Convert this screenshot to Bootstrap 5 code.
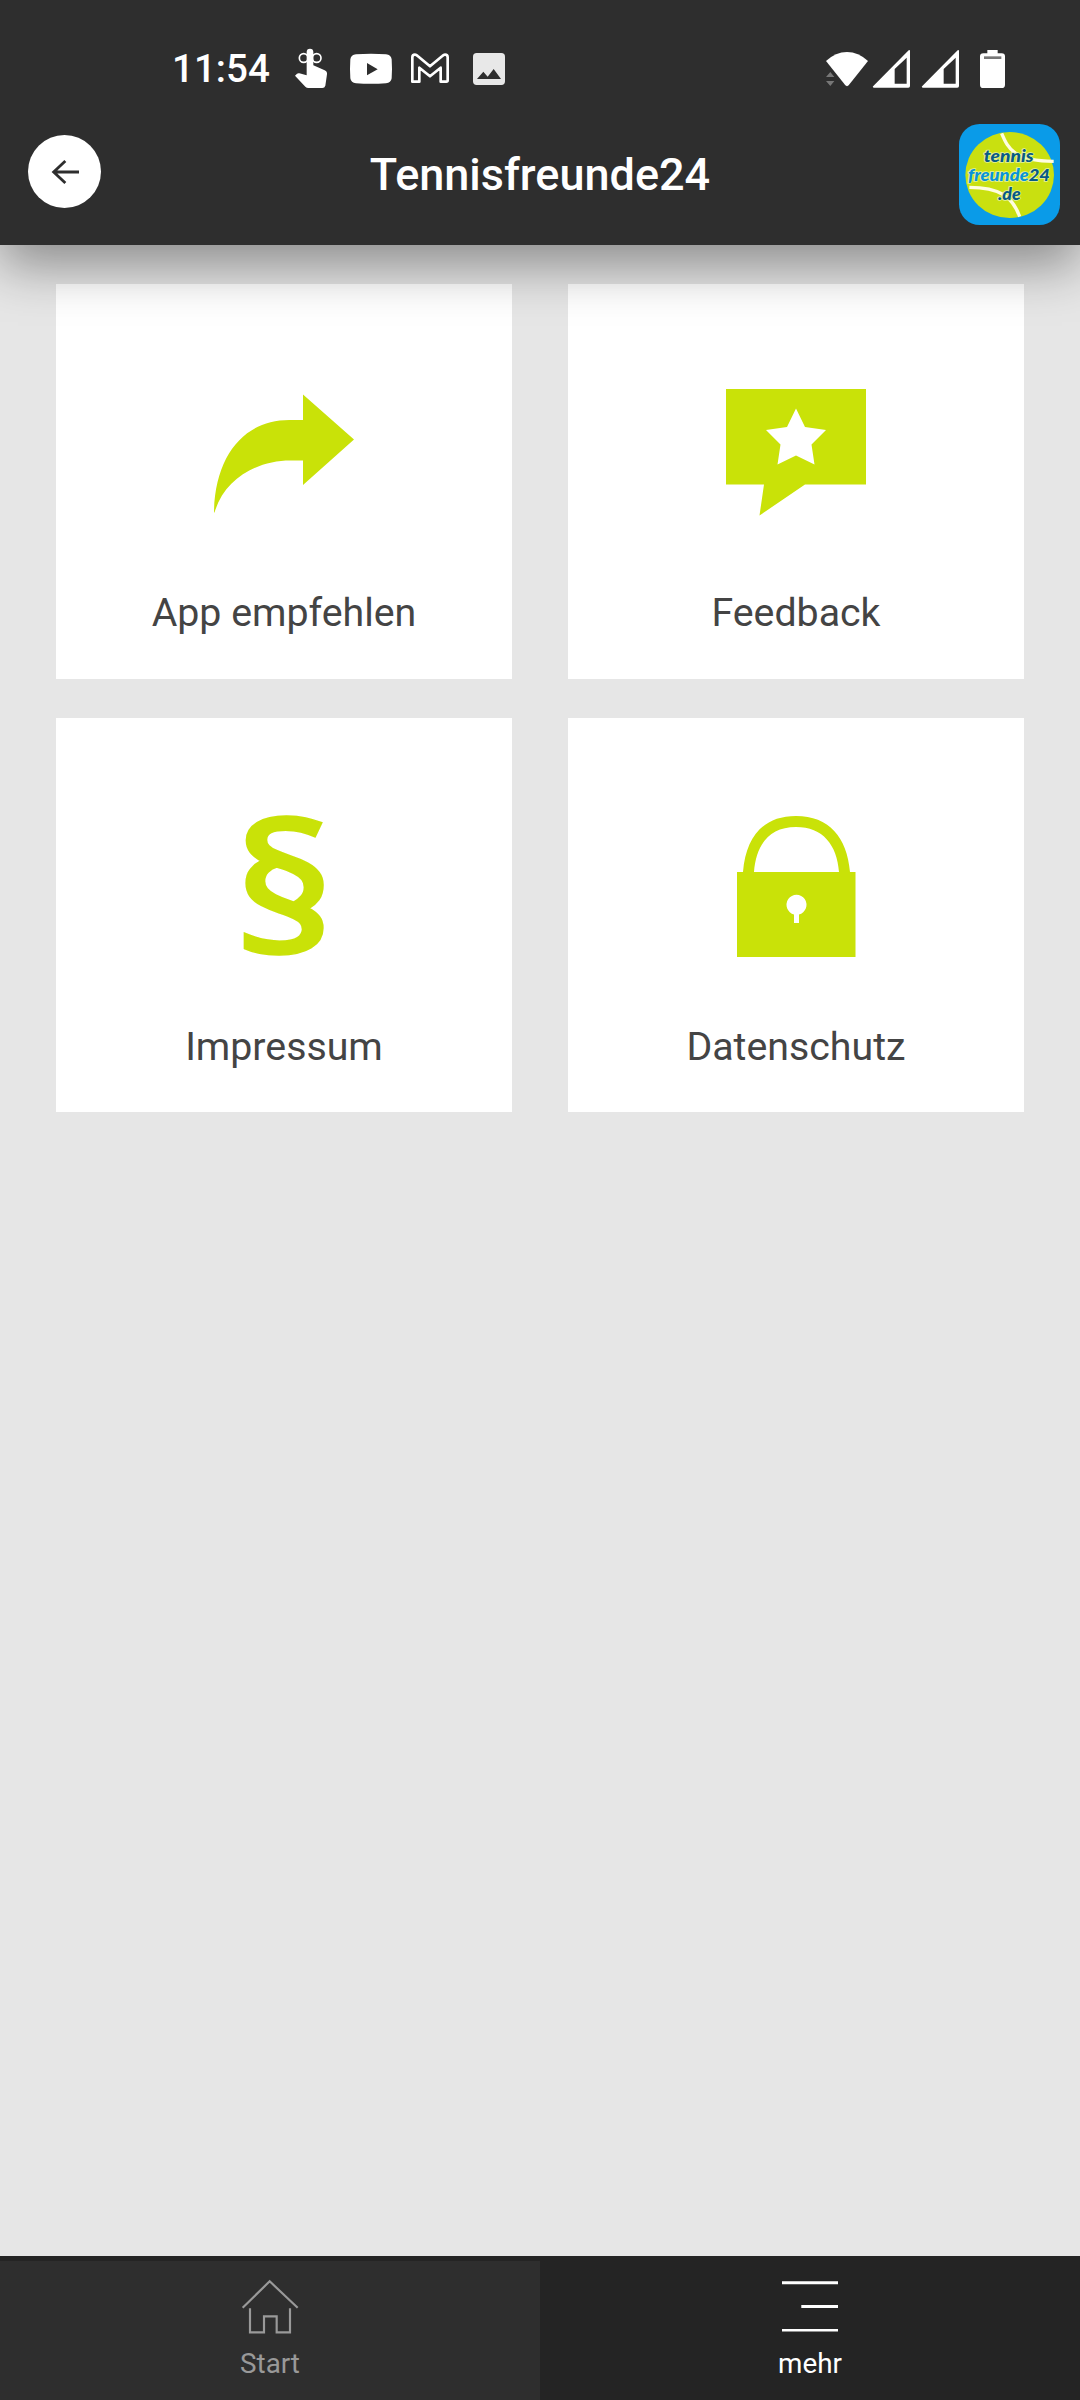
<!DOCTYPE html>
<html lang="de">
<head>
<meta charset="utf-8">
<meta name="viewport" content="width=device-width, initial-scale=1">
<title>Tennisfreunde24</title>
<link href="https://cdn.jsdelivr.net/npm/bootstrap@5.3.0/dist/css/bootstrap.min.css" rel="stylesheet">
<style>
  body { font-family: Roboto, "Liberation Sans", sans-serif; background: #e6e6e6; height: 2400px; overflow: hidden; }
  svg { display: block; flex: none; }
  .app-head { height: 245px; background: #2e2e2e; box-shadow: 0 20px 50px rgba(0,0,0,.4); z-index: 5; }
  .status { height: 110px; padding: 30px 74px 0 172px; }
  .status svg { height: 80px; fill: #fff; }
  .clock { width: 122px; font-size: 38.6px; font-weight: 500; line-height: 77px; }
  .gap-a { margin-left: 21px; }
  .gap-b { margin-left: 17px; }
  .gap-c { margin-left: 3px; }
  .gap-d { margin-left: 10px; }
  .gap-e { margin-left: 22px; }
  .title-bar { height: 135px; padding: 14px 20px 0 28px; }
  .back { width: 73px; height: 73px; margin-top: 11px; }
  .app-name { font-size: 45px; font-weight: 500; line-height: 52px; margin: 25px 0 0 20px; }
  .tiles { padding: 39px 56px 0; }
  .tile-row { --bs-gutter-x: 56px; }
  .tile-row + .tile-row { padding-top: 39px; }
  .tile { height: 394.5px; border: 0; border-radius: 0; color: #444; text-decoration: none; }
  .tile svg { width: 100%; height: 296px; fill: #c9e208; }
  .tile span { font-size: 39.3px; line-height: 46px; margin-top: 10px; }
  .tabs { height: 144px; background: #242424; }
  .tab { font-size: 27.8px; line-height: 32px; color: #999; text-decoration: none; }
  .tab.start { background: #2e2e2e; border-top: 5px solid #242424; }
  .tab.more { color: #fff; padding-top: 5px; }
  .tab svg { width: 60px; height: 60px; margin: 15px 0 12px; }
</style>
<script src="https://cdn.jsdelivr.net/npm/bootstrap@5.3.0/dist/js/bootstrap.bundle.min.js"></script>
</head>
<body class="d-flex flex-column">
<header class="app-head position-relative flex-shrink-0 text-white">
  <div class="status d-flex justify-content-between">
    <div class="d-flex">
      <span class="clock">11:54</span>
      <svg width="34" viewBox="432 0 102 240"><path d="M470 66a10 10 0 0 1 20 0v40l34 15q8 3 7 12l-5 34q-2 7-9 7h-42q-5 0-9-4l-31-33 6-6q3-2 7-1l22 6z"/><g fill="none" stroke="#fff" stroke-width="5"><circle cx="461" cy="84" r="13"/><circle cx="500" cy="84" r="13"/></g></svg>
      <svg class="gap-a" width="44" viewBox="597 0 132 240"><path fill-rule="evenodd" d="M618 73q45-3 90 0 15 1 17 15 2 29 0 57-2 14-17 15-45 3-90 0-15-1-17-15-2-28 0-57 2-14 17-15zM651 99v37l32-18.500z"/></svg>
      <svg class="gap-b" width="40" viewBox="780 0 120 240"><path fill="none" stroke="#fff" stroke-width="8" stroke-linejoin="round" d="M787 155V82q0-8 8-8 4 0 8 4l37 31 37-31q4-4 8-4 8 0 8 8v69q0 4-4 4h-17v-42l-32 26-32-26v42h-17q-4 0-4-4z"/></svg>
      <svg class="gap-e" width="34" viewBox="966 0 102 240"><path fill="#e8e8e8" fill-rule="evenodd" d="M980 69h74q11 0 11 11v74q0 11-11 11h-74q-11 0-11-11V80q0-11 11-11zM981 147h72l-22-30-18 23-13-15z"/></svg>
    </div>
    <div class="d-flex">
      <svg width="44" viewBox="75 0 132 240"><path d="M78 93q29-27 63-27t63 27l-58 73q-5 5-10 0z"/><path fill="#777" d="M78 141l13-15 12 15zM78 153h25l-12 15z"/></svg>
      <svg class="gap-c" width="39" viewBox="216 0 117 240"><path fill-rule="evenodd" d="M326 61q4-3 4 3v104q0 5-5 5H222q-6-1-2-5zM284 117v44h36V83z"/></svg>
      <svg class="gap-d" width="39" viewBox="363 0 117 240"><path fill-rule="evenodd" d="M473 61q4-3 4 3v104q0 5-5 5H369q-6-1-2-5zM431 117v44h36V83z"/></svg>
      <svg width="46" viewBox="480 0 138 240"><path d="M562 60h31v10h12q10 0 10 9v85q0 10-10 10h-55q-10 0-10-10V79q0-9 10-9h12z"/><path fill="#777" d="M552 79h52v8h-52z"/></svg>
    </div>
  </div>
  <div class="title-bar d-flex justify-content-between align-items-start">
    <svg class="back" viewBox="84 75 219 219"><circle cx="193.500" cy="184.500" r="109.500" fill="#fff"/><path fill="none" stroke="#2e2e2e" stroke-width="8.500" d="M237 186h-75M196 153l-35 33 35 33"/></svg>
    <h1 class="app-name">Tennisfreunde24</h1>
    <svg width="101" height="101" viewBox="57 42 303 303"><rect x="57" y="42" width="303" height="303" rx="62" fill="#0a9be8"/><ellipse cx="209" cy="195" rx="133" ry="129" fill="#c9e010"/><g fill="none" stroke="#fffde0" stroke-width="10"><path d="M185 70c20 48 38 82 156 84"/><path d="M88 232c90 0 130 28 151 88"/></g>
      <g font-family="Lato, sans-serif" font-weight="900" font-style="italic" font-size="51" stroke="#e4f29a" stroke-width="5" paint-order="stroke"><text x="131" y="156" textLength="150" lengthAdjust="spacingAndGlyphs" fill="#075a86">tennis</text><text x="84" y="214" textLength="246" lengthAdjust="spacingAndGlyphs" fill="#0793d8">freunde<tspan fill="#075a86">24</tspan></text><text x="174" y="269" textLength="68" lengthAdjust="spacingAndGlyphs" fill="#075a86">.de</text></g></svg>
  </div>
</header>

<main class="tiles flex-grow-1">
  <div class="row tile-row row-cols-2">
    <div class="col"><a href="#" class="card tile text-center"><svg viewBox="0 0 456 296"><path d="M158 228.500C159 169 191 134 237 136H247V110.500L298 155.500 247 201V176.500H237C204 175.500 169 193 158.500 228.500z"/></svg><span>App empfehlen</span></a></div>
    <div class="col"><a href="#" class="card tile text-center"><svg viewBox="0 0 456 296"><path fill-rule="evenodd" d="M158 105H298V200.500H237L191.500 231.500 196 200.500H158zM228 124.500L219 143 198 146 212.500 160.500 209.500 180.500 228 171.500 246.500 180.500 243.500 160.500 258 146 237 143z"/></svg><span>Feedback</span></a></div>
  </div>
  <div class="row tile-row row-cols-2">
    <div class="col"><a href="#" class="card tile text-center"><svg viewBox="0 0 456 296"><text transform="translate(228 236) scale(1.130 1)" text-anchor="middle" font-family="Open Sans, sans-serif" font-weight="600" font-size="180" stroke="#c9e208" stroke-width="1.500">§</text></svg><span>Impressum</span></a></div>
    <div class="col"><a href="#" class="card tile text-center"><svg viewBox="0 0 456 296"><path fill-rule="evenodd" d="M175 154C178 119 195 98 228 98S279 119 282 154H287.500V239H169V154zM186 154H271C269 127 255 109 228 109S188 127 186 154zM226 196.500a10 10 0 1 1 5 0V205h-5z"/></svg><span>Datenschutz</span></a></div>
  </div>
</main>

<nav class="tabs d-flex flex-shrink-0">
  <a href="#" class="tab start w-50 d-flex flex-column align-items-center"><svg viewBox="180 108 180 180" fill="none" stroke="#999" stroke-width="6.500"><path d="M188 203l81-79 84 79M210 205v72h42v-48h38v48h40v-72"/></svg>Start</a>
  <a href="#" class="tab more w-50 d-flex flex-column align-items-center"><svg viewBox="0 0 60 60" fill="#fff"><path d="M2 5.300h56v3H2zM21.300 29h36.700v3H21.300zM2 53h56v2.400H2z"/></svg>mehr</a>
</nav>
</body>
</html>
